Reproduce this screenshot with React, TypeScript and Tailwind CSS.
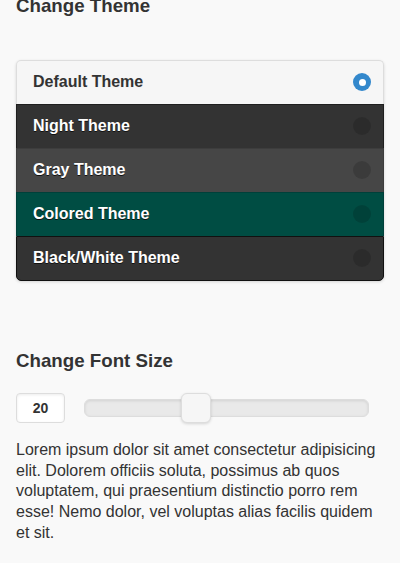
import React, { useState } from "react";

const themes = [
  { name: "Default Theme", row: "bg-[#f6f6f6] text-[#333] [text-shadow:0_1px_0_#f3f3f3] border-[#ddd] rounded-t-[5px]" },
  { name: "Night Theme", row: "bg-[#333] text-white [text-shadow:0_1px_0_#111] border-[#1f1f1f]" },
  { name: "Gray Theme", row: "bg-[#464646] text-white [text-shadow:0_1px_0_#111] border-[#3d3d3d]" },
  { name: "Colored Theme", row: "bg-[#004d43] text-white [text-shadow:0_1px_0_#111] border-[#00403a]" },
  { name: "Black/White Theme", row: "bg-[#333] text-white [text-shadow:0_1px_0_#111] border-[#111] rounded-b-[5px]" },
];

export default function App() {
  const [selected, setSelected] = useState(0);
  const [size, setSize] = useState(20);

  return (
    <div className="min-h-[563px] bg-[#f9f9f9] px-4 font-['Liberation_Sans',Arial,sans-serif] text-[#333] overflow-hidden">
      <h3 className="mt-[-6px] text-[18.72px] font-bold leading-[24px]">Change Theme</h3>

      <ul className="mt-[42px] rounded-[5px] shadow-[0_1px_3px_rgba(0,0,0,0.15)]">
        {themes.map((t, i) => (
          <li
            key={t.name}
            onClick={() => setSelected(i)}
            className={`flex h-[44px] items-center justify-between border-x border-t pb-[1px] pl-[16px] pr-[12px] text-[16px] font-bold ${t.row} ${i === themes.length - 1 ? "h-[45px] border-b" : ""}`}
          >
            <span>{t.name}</span>
            {selected === i ? (
              <span className="flex h-[18px] w-[18px] items-center justify-center rounded-full bg-[#3388cc]">
                <span className="h-[7px] w-[7px] rounded-full bg-white" />
              </span>
            ) : (
              <span className="h-[18px] w-[18px] rounded-full bg-black/15" />
            )}
          </li>
        ))}
      </ul>

      <h3 className="mt-[68px] text-[18.72px] font-bold leading-[24px]">Change Font Size</h3>

      <div className="mt-[20px] flex items-center">
        <div className="flex h-[30px] w-[49px] items-center justify-center rounded-[4px] border border-[#ddd] bg-white text-[14px] font-bold shadow-[inset_0_1px_3px_rgba(0,0,0,0.08)]">
          {size}
        </div>
        <div
          className="relative ml-[19px] mr-[15px] h-[18px] flex-1 rounded-[6px] border border-[#ddd] bg-[#e9e9e9] shadow-[inset_0_1px_3px_rgba(0,0,0,0.1)]"
          onClick={(e) => {
            const r = e.currentTarget.getBoundingClientRect();
            setSize(Math.round(10 + ((e.clientX - r.left) / r.width) * 30));
          }}
        >
          <div
            className="absolute top-1/2 h-[30px] w-[30px] -translate-x-1/2 -translate-y-1/2 rounded-[6px] border border-[#ddd] bg-[#f6f6f6] shadow-[0_1px_3px_rgba(0,0,0,0.15)]"
            style={{ left: `${((size - 10) / 30) * 100 + 6}%` }}
          />
        </div>
      </div>

      <p className="mt-[17px] text-[16px] leading-[20.7px]">
        Lorem ipsum dolor sit amet consectetur adipisicing elit. Dolorem officiis soluta, possimus ab quos voluptatem, qui praesentium distinctio porro rem esse! Nemo dolor, vel voluptas alias facilis quidem et sit.
      </p>
    </div>
  );
}
